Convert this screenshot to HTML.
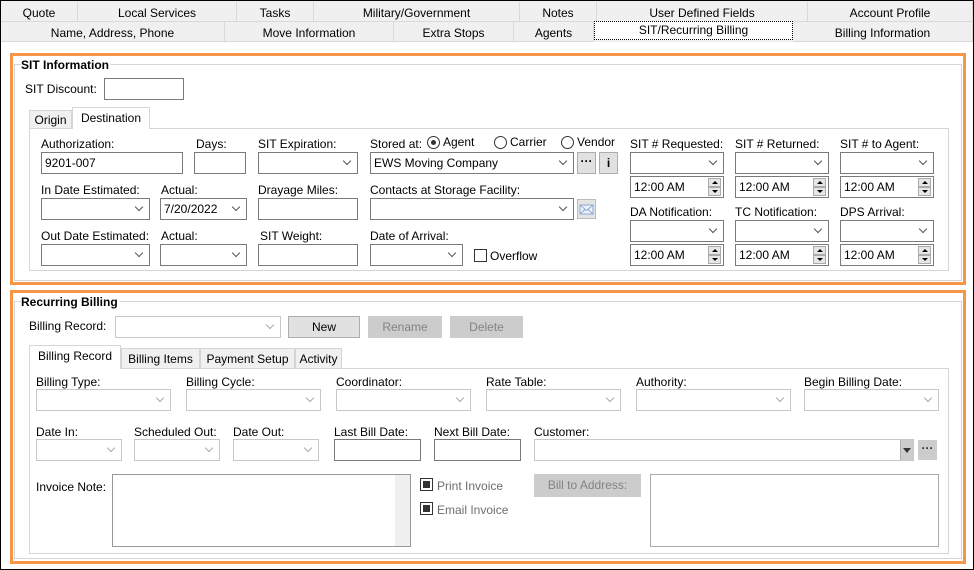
<!DOCTYPE html>
<html><head><meta charset="utf-8"><style>
*{box-sizing:border-box;margin:0;padding:0}
body{width:974px;height:570px;position:relative;background:#fff;font-family:"Liberation Sans",sans-serif;font-size:12px;color:#000;overflow:hidden}
.a{position:absolute}
.frame{left:0;top:0;width:974px;height:570px;border:1px solid #000}
.tab{position:absolute;background:#f0f0f0;border-right:1px solid #d9d9d9;border-bottom:1px solid #d9d9d9;text-align:center;line-height:22px;height:20px}
.tab.sel{background:#fff;border:1px dotted #000;line-height:16px;height:19px}
.ob{position:absolute;border:3px solid #f79646}
.fs{position:absolute;border-top:1px solid #d5d5d5}
.lg{position:absolute;font-weight:bold;background:#fff;padding-right:2px}
.panel{position:absolute;border:1px solid #d5d5d5;background:#fff}
.in{position:absolute;border:1px solid #7a7a7a;background:#fff;height:22px;padding-left:3px;line-height:20px}
.sel2::after{content:"";position:absolute;right:7px;top:5px;width:5px;height:5px;border-right:1px solid #555;border-bottom:1px solid #555;transform:rotate(45deg)}
.dis{border-color:#c8c8c8}
.dis::after{border-color:#aaa}
.lb{position:absolute;white-space:nowrap}
.spin{position:absolute;right:2px;width:13px;height:18px;top:1px}
.spin i{display:block;height:9px;border:1px solid #aaa;background:#e6e6e6;position:relative}
.spin i::after{content:"";position:absolute;left:3px;top:2px;border-left:3px solid transparent;border-right:3px solid transparent}
.spin i.u::after{border-bottom:3px solid #000}
.spin i.d::after{border-top:3px solid #000}
.btn{position:absolute;border:1px solid #adadad;background:#e1e1e1;text-align:center;line-height:20px;height:22px}
.btn.d{background:#cccccc;color:#838383;border-color:#cccccc}
.itab{position:absolute;background:#f0f0f0;border:1px solid #d5d5d5;text-align:center;height:21px;line-height:20px}
</style></head><body>
<div class="a frame"></div>
<div class="a" style="left:1px;top:1px;width:972px;height:41px;background:#f0f0f0"></div>
<div class="tab" style="left:1px;top:2px;width:77px">Quote</div>
<div class="tab" style="left:78px;top:2px;width:159px">Local Services</div>
<div class="tab" style="left:237px;top:2px;width:77px">Tasks</div>
<div class="tab" style="left:314px;top:2px;width:206px">Military/Government</div>
<div class="tab" style="left:520px;top:2px;width:77px">Notes</div>
<div class="tab" style="left:597px;top:2px;width:211px">User Defined Fields</div>
<div class="tab" style="left:808px;top:2px;width:165px">Account Profile</div>
<div class="tab" style="left:1px;top:22px;width:224px">Name, Address, Phone</div>
<div class="tab" style="left:225px;top:22px;width:169px">Move Information</div>
<div class="tab" style="left:394px;top:22px;width:120px">Extra Stops</div>
<div class="tab" style="left:514px;top:22px;width:80px">Agents</div>
<div class="tab" style="left:793px;top:22px;width:180px;border-right:1px solid #d9d9d9">Billing Information</div>
<div class="tab sel" style="left:594px;top:21px;width:199px">SIT/Recurring Billing</div>

<div class="ob" style="left:10px;top:53px;width:956px;height:232px"></div>
<div class="fs" style="left:14px;top:64px;width:948px;height:217px;border:1px solid #d5d5d5"></div>
<div class="lg" style="left:21px;top:58px">SIT Information</div>
<div class="lb" style="left:25px;top:82px">SIT Discount:</div>
<div class="in" style="left:104px;top:78px;width:80px"></div>
<div class="panel" style="left:29px;top:128px;width:920px;height:143px"></div>
<div class="itab" style="left:29px;top:110px;width:43px;height:19px;line-height:19px">Origin</div>
<div class="itab" style="left:72px;top:107px;width:78px;height:22px;background:#fff;border-bottom:none;line-height:20px">Destination</div>

<div class="lb" style="left:41px;top:137px">Authorization:</div>
<div class="in" style="left:41px;top:152px;width:142px">9201-007</div>
<div class="lb" style="left:196px;top:137px">Days:</div>
<div class="in" style="left:194px;top:152px;width:52px"></div>
<div class="lb" style="left:258px;top:137px">SIT Expiration:</div>
<div class="in sel2" style="left:258px;top:152px;width:100px"></div>
<div class="lb" style="left:370px;top:137px">Stored at:</div>
<div class="a" style="left:427px;top:136px;width:13px;height:13px;border:1px solid #333;border-radius:50%"><div class="a" style="left:3px;top:3px;width:5px;height:5px;border-radius:50%;background:#333"></div></div>
<div class="lb" style="left:443px;top:135px">Agent</div>
<div class="a" style="left:494px;top:136px;width:13px;height:13px;border:1px solid #333;border-radius:50%"></div>
<div class="lb" style="left:510px;top:135px">Carrier</div>
<div class="a" style="left:561px;top:136px;width:13px;height:13px;border:1px solid #333;border-radius:50%"></div>
<div class="lb" style="left:577px;top:135px">Vendor</div>
<div class="in sel2" style="left:370px;top:152px;width:204px">EWS Moving Company</div>
<div class="btn" style="left:577px;top:152px;width:19px;font-weight:bold;line-height:16px">···</div>
<div class="btn" style="left:599px;top:152px;width:19px;font-weight:bold">i</div>

<div class="lb" style="left:41px;top:183px">In Date Estimated:</div>
<div class="in sel2" style="left:41px;top:198px;width:109px"></div>
<div class="lb" style="left:161px;top:183px">Actual:</div>
<div class="in sel2" style="left:160px;top:198px;width:87px">7/20/2022</div>
<div class="lb" style="left:258px;top:183px">Drayage Miles:</div>
<div class="in" style="left:258px;top:198px;width:100px"></div>
<div class="lb" style="left:370px;top:183px">Contacts at Storage Facility:</div>
<div class="in sel2" style="left:370px;top:198px;width:204px"></div>
<div class="a" style="left:577px;top:199px;width:19px;height:20px;border:1px solid #bbb;background:#e4e4e4"><svg width="17" height="18" style="position:absolute;left:0;top:0"><rect x="2" y="5" width="13" height="9" fill="#eef3fb" stroke="#8aaad0"/><path d="M2 5 L8.5 10.5 L15 5 M2 14 L7 9.5 M15 14 L10 9.5" fill="none" stroke="#8aaad0"/></svg></div>

<div class="lb" style="left:41px;top:229px">Out Date Estimated:</div>
<div class="in sel2" style="left:41px;top:244px;width:109px"></div>
<div class="lb" style="left:161px;top:229px">Actual:</div>
<div class="in sel2" style="left:160px;top:244px;width:87px"></div>
<div class="lb" style="left:260px;top:229px">SIT Weight:</div>
<div class="in" style="left:258px;top:244px;width:100px"></div>
<div class="lb" style="left:370px;top:229px">Date of Arrival:</div>
<div class="in sel2" style="left:370px;top:244px;width:93px"></div>
<div class="a" style="left:474px;top:249px;width:13px;height:13px;border:1px solid #333;background:#fff"></div>
<div class="lb" style="left:490px;top:249px">Overflow</div>

<div class="lb" style="left:630px;top:137px">SIT # Requested:</div>
<div class="lb" style="left:735px;top:137px">SIT # Returned:</div>
<div class="lb" style="left:840px;top:137px">SIT # to Agent:</div>
<div class="in sel2" style="left:630px;top:152px;width:94px"></div>
<div class="in sel2" style="left:735px;top:152px;width:94px"></div>
<div class="in sel2" style="left:840px;top:152px;width:94px"></div>
<div class="in" style="left:630px;top:176px;width:94px">12:00 AM<div class="spin"><i class="u"></i><i class="d"></i></div></div>
<div class="in" style="left:735px;top:176px;width:94px">12:00 AM<div class="spin"><i class="u"></i><i class="d"></i></div></div>
<div class="in" style="left:840px;top:176px;width:94px">12:00 AM<div class="spin"><i class="u"></i><i class="d"></i></div></div>
<div class="lb" style="left:630px;top:205px">DA Notification:</div>
<div class="lb" style="left:735px;top:205px">TC Notification:</div>
<div class="lb" style="left:840px;top:205px">DPS Arrival:</div>
<div class="in sel2" style="left:630px;top:220px;width:94px"></div>
<div class="in sel2" style="left:735px;top:220px;width:94px"></div>
<div class="in sel2" style="left:840px;top:220px;width:94px"></div>
<div class="in" style="left:630px;top:244px;width:94px">12:00 AM<div class="spin"><i class="u"></i><i class="d"></i></div></div>
<div class="in" style="left:735px;top:244px;width:94px">12:00 AM<div class="spin"><i class="u"></i><i class="d"></i></div></div>
<div class="in" style="left:840px;top:244px;width:94px">12:00 AM<div class="spin"><i class="u"></i><i class="d"></i></div></div>

<div class="ob" style="left:10px;top:290px;width:956px;height:274px"></div>
<div class="fs" style="left:14px;top:301px;width:948px;height:258px;border:1px solid #d5d5d5"></div>
<div class="lg" style="left:21px;top:295px">Recurring Billing</div>
<div class="lb" style="left:29px;top:319px">Billing Record:</div>
<div class="in sel2 dis" style="left:115px;top:316px;width:166px"></div>
<div class="btn" style="left:288px;top:316px;width:72px">New</div>
<div class="btn d" style="left:368px;top:316px;width:74px">Rename</div>
<div class="btn d" style="left:450px;top:316px;width:73px">Delete</div>
<div class="panel" style="left:29px;top:368px;width:920px;height:186px"></div>
<div class="itab" style="left:121px;top:348px;width:79px">Billing Items</div>
<div class="itab" style="left:200px;top:348px;width:95px">Payment Setup</div>
<div class="itab" style="left:295px;top:348px;width:47px">Activity</div>
<div class="itab" style="left:29px;top:345px;width:92px;height:24px;background:#fff;border-bottom:none;line-height:20px">Billing Record</div>

<div class="lb" style="left:36px;top:375px">Billing Type:</div>
<div class="lb" style="left:186px;top:375px">Billing Cycle:</div>
<div class="lb" style="left:336px;top:375px">Coordinator:</div>
<div class="lb" style="left:486px;top:375px">Rate Table:</div>
<div class="lb" style="left:636px;top:375px">Authority:</div>
<div class="lb" style="left:804px;top:375px">Begin Billing Date:</div>
<div class="in sel2 dis" style="left:36px;top:389px;width:135px"></div>
<div class="in sel2 dis" style="left:186px;top:389px;width:135px"></div>
<div class="in sel2 dis" style="left:336px;top:389px;width:135px"></div>
<div class="in sel2 dis" style="left:486px;top:389px;width:135px"></div>
<div class="in sel2 dis" style="left:636px;top:389px;width:155px"></div>
<div class="in sel2 dis" style="left:804px;top:389px;width:135px"></div>

<div class="lb" style="left:36px;top:425px">Date In:</div>
<div class="lb" style="left:134px;top:425px">Scheduled Out:</div>
<div class="lb" style="left:233px;top:425px">Date Out:</div>
<div class="lb" style="left:334px;top:425px">Last Bill Date:</div>
<div class="lb" style="left:434px;top:425px">Next Bill Date:</div>
<div class="lb" style="left:534px;top:425px">Customer:</div>
<div class="in sel2 dis" style="left:36px;top:439px;width:86px"></div>
<div class="in sel2 dis" style="left:134px;top:439px;width:86px"></div>
<div class="in sel2 dis" style="left:233px;top:439px;width:86px"></div>
<div class="in" style="left:334px;top:439px;width:87px"></div>
<div class="in" style="left:434px;top:439px;width:87px"></div>
<div class="in dis" style="left:534px;top:439px;width:380px"><div class="a" style="right:0;top:0;width:13px;height:20px;background:#ccc;border-left:1px solid #aaa"><div class="a" style="left:2px;top:8px;border-left:4px solid transparent;border-right:4px solid transparent;border-top:5px solid #333"></div></div></div>
<div class="btn d" style="left:918px;top:440px;width:19px;height:20px;color:#333;font-weight:bold;line-height:14px">···</div>

<div class="lb" style="left:36px;top:480px">Invoice Note:</div>
<div class="in dis" style="left:112px;top:474px;width:299px;height:73px;border-color:#999"><div class="a" style="right:0;top:0;width:15px;height:71px;background:#f0f0f0"></div></div>
<div class="a" style="left:420px;top:478px;width:13px;height:13px;border:1px solid #333;background:#fff"><div class="a" style="left:2px;top:2px;width:7px;height:7px;background:#333"></div></div>
<div class="lb" style="left:437px;top:479px;color:#6d6d6d">Print Invoice</div>
<div class="a" style="left:420px;top:502px;width:13px;height:13px;border:1px solid #333;background:#fff"><div class="a" style="left:2px;top:2px;width:7px;height:7px;background:#333"></div></div>
<div class="lb" style="left:437px;top:503px;color:#6d6d6d">Email Invoice</div>
<div class="btn d" style="left:534px;top:474px;width:107px;height:23px">Bill to Address:</div>
<div class="in" style="left:650px;top:474px;width:289px;height:73px;border-color:#aaa"></div>
</body></html>
